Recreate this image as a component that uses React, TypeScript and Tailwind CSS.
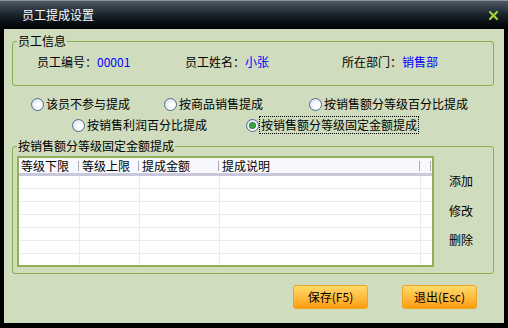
import React from "react";

function Radio({ checked }: { checked?: boolean }) {
  return (
    <span className="w-[13px] h-[13px] shrink-0 rounded-full border border-[#4a6e96] bg-[radial-gradient(circle_at_65%_65%,#ffffff_20%,#d3dae3)] flex items-center justify-center">
      {checked && <span className="w-[5px] h-[5px] rounded-full bg-[#2faa2f] ring-1 ring-[#4d7a4d]" />}
    </span>
  );
}

function Opt({ label, w, checked }: { label: string; w?: string; checked?: boolean }) {
  return (
    <div className={`flex items-center gap-[2px] ${w ?? ""}`}>
      <Radio checked={checked} />
      {checked ? (
        <span className="outline-1 outline-dotted outline-black outline-offset-[1px]">{label}</span>
      ) : (
        <span>{label}</span>
      )}
    </div>
  );
}

const cols = [
  { w: "w-[61px]", t: "等级下限" },
  { w: "w-[60px]", t: "等级上限" },
  { w: "w-[80px]", t: "提成金额" },
  { w: "w-[201px]", t: "提成说明" },
];

export default function App() {
  return (
    <div className="w-[508px] h-[328px] bg-black flex flex-col overflow-hidden font-['Noto_Sans_CJK_SC','Noto_Sans',sans-serif] text-[12px] leading-[14px] text-black">
      <div className="h-[29px] shrink-0 flex items-center justify-between border-t border-[#8a949e] bg-gradient-to-b from-[#4f5a65] via-[#19232c] to-[#020304] pl-[22px] pr-[10px]">
        <span className="text-white">员工提成设置</span>
        <svg width="9" height="9" viewBox="0 0 9 9">
          <path d="M1 1L8 8M8 1L1 8" stroke="#9ed43a" strokeWidth="2.2" strokeLinecap="square" />
        </svg>
      </div>
      <div className="flex-1 ml-[4px] mr-[4px] mb-[5px] bg-[#cfdcbd] pl-[8px] pr-[10px] flex flex-col">
        <fieldset className="mt-[5px] h-[52px] border border-[#8aab4f] rounded-[3px]">
          <legend className="ml-[4px] px-[1px]">员工信息</legend>
          <div className="flex pt-[7px] pl-[24px]">
            <div className="w-[148px]">
              员工编号：<span className="text-[#0000ff]">00001</span>
            </div>
            <div className="w-[157px]">
              员工姓名：<span className="text-[#0000ff]">小张</span>
            </div>
            <div>
              所在部门：<span className="text-[#0000ff]">销售部</span>
            </div>
          </div>
        </fieldset>

        <div className="flex items-center h-[14px] mt-[11px] pl-[19px]">
          <Opt w="w-[133px]" label="该员不参与提成" />
          <Opt w="w-[145px]" label="按商品销售提成" />
          <Opt label="按销售额分等级百分比提成" />
        </div>
        <div className="flex items-center h-[14px] mt-[7px] pl-[60px]">
          <Opt w="w-[174px]" label="按销售利润百分比提成" />
          <Opt checked label="按销售额分等级固定金额提成" />
        </div>

        <fieldset className="mt-[7px] h-[135px] border border-[#8aab4f] rounded-[3px]">
          <legend className="ml-[4px] px-[1px]">按销售额分等级固定金额提成</legend>
          <div className="flex pt-[3px] pl-[4px]">
            <div className="w-[417px] h-[111px] border-2 border-[#8fb055] bg-white overflow-hidden">
              <div className="flex h-[18px] bg-[#f7f8fd] border-b-[3px] border-[#c8c8da]">
                {cols.map((c) => (
                  <div key={c.t} className={`${c.w} flex items-center justify-between pl-[2px]`}>
                    <span>{c.t}</span>
                    <span className="w-px h-[10px] bg-[#a9a9b2] mr-[1px]" />
                  </div>
                ))}
                <div className="flex-1 flex items-center justify-end">
                  <span className="w-px h-[10px] bg-[#a9a9b2] mr-[1px]" />
                </div>
              </div>
              {Array.from({ length: 7 }).map((_, i) => (
                <div key={i} className="flex h-[13px] border-b border-[#ebebeb]">
                  {cols.map((c) => (
                    <div key={c.t} className={`${c.w} border-r border-[#ebebeb]`} />
                  ))}
                  <div className="flex-1" />
                </div>
              ))}
            </div>
            <div className="flex flex-col pl-[15px] pt-[18px]">
              <span>添加</span>
              <span className="mt-[16px]">修改</span>
              <span className="mt-[15px]">删除</span>
            </div>
          </div>
        </fieldset>

        <div className="flex justify-end gap-[34px] mt-[11px] pr-[17px]">
          <button className="w-[75px] h-[24px] rounded-[3px] border border-[#eda522] bg-gradient-to-b from-[#ffdb66] to-[#ff9c00] flex items-center justify-center">
            保存(F5)
          </button>
          <button className="w-[75px] h-[24px] rounded-[3px] border border-[#eda522] bg-gradient-to-b from-[#ffdb66] to-[#ff9c00] flex items-center justify-center">
            退出(Esc)
          </button>
        </div>
      </div>
    </div>
  );
}
